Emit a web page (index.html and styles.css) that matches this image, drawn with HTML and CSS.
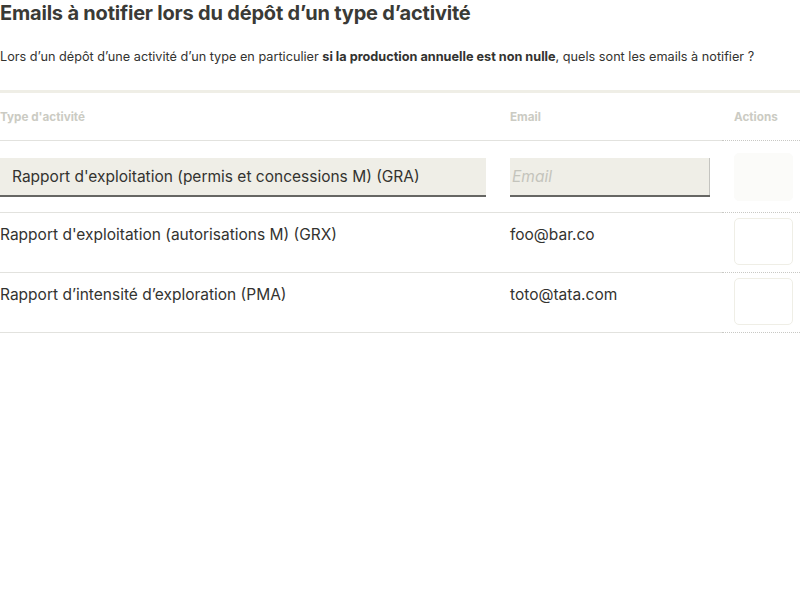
FILE: index.html
```html
<!DOCTYPE html>
<html lang="fr">
<head>
<meta charset="utf-8">
<link rel="stylesheet" href="styles.css">
</head>
<body>
<h1 class="title">Emails à notifier lors du dépôt d’un type d’activité</h1>
<p class="intro">Lors d’un dépôt d’une activité d’un type en particulier <strong>si la production annuelle est non nulle</strong>, quels sont les emails à notifier ?</p>
<table class="tbl">
  <thead>
    <tr>
      <th class="c-type">Type d'activité</th>
      <th class="c-email">Email</th>
      <th class="c-act">Actions</th>
    </tr>
  </thead>
  <tbody>
    <tr class="row-new">
      <td class="c-type"><div class="field">Rapport d'exploitation (permis et concessions M) (GRA)</div></td>
      <td class="c-email"><div class="field placeholder">Email</div></td>
      <td class="c-act"><div class="btn btn-disabled"></div></td>
    </tr>
    <tr class="row">
      <td class="c-type">Rapport d'exploitation (autorisations M) (GRX)</td>
      <td class="c-email">foo@bar.co</td>
      <td class="c-act"><div class="btn"></div></td>
    </tr>
    <tr class="row">
      <td class="c-type">Rapport d’intensité d’exploration (PMA)</td>
      <td class="c-email">toto@tata.com</td>
      <td class="c-act"><div class="btn"></div></td>
    </tr>
  </tbody>
</table>
</body>
</html>
```

FILE: styles.css
```css
html, body {
  margin: 0;
  padding: 0;
  background: #fff;
}
body {
  font-family: Inter, "Liberation Sans", sans-serif;
  color: #333330;
}
.title {
  margin: 0;
  font-size: 20px;
  line-height: 26px;
  font-weight: 700;
  color: #3a3a36;
  letter-spacing: -0.2px;
}
.intro {
  margin: 22px 0 0 0;
  font-size: 12.7px;
  line-height: 18px;
  color: #333330;
}
.intro strong {
  font-weight: 700;
}
.tbl {
  margin-top: 24px;
  width: 800px;
  border-collapse: collapse;
  border-top: 3px solid #efeee6;
}
.tbl th {
  height: 47px;
  font-size: 11.7px;
  font-weight: 700;
  color: #cbcbc3;
  text-align: left;
  vertical-align: middle;
  padding: 0 12px;
  border-bottom: 1px solid #e2e2de;
}
.tbl td {
  font-size: 15.5px;
  line-height: 24px;
  padding: 0 12px;
  border-bottom: 1px solid #e2e2de;
}
.tbl .c-type { width: 486px; padding-left: 0; }
.tbl .c-email { width: 200px; }
.tbl .c-act { width: 59px; padding-right: 7px; border-bottom: 1px dotted #c8c8c4; }
.row-new td {
  height: 71px;
  vertical-align: middle;
}
.row td {
  height: 49px;
  vertical-align: top;
  padding-top: 10px;
}
.row td.c-act { padding-top: 5px; height: 54px; }
.field {
  height: 37px;
  background: #efeee7;
  border-bottom: 2px solid #666663;
  box-sizing: content-box;
  padding: 0 12px;
  line-height: 37px;
  font-size: 15.5px;
  color: #333330;
  margin-top: 2px;
}
.c-email .field {
  padding: 0 2px;
  box-shadow: inset -1px 0 0 #c4c4c0;
}
.placeholder {
  font-style: italic;
  color: #c4c4bc;
}
.btn {
  width: 59px;
  height: 47px;
  box-sizing: border-box;
  border: 1px solid #efeee6;
  border-radius: 5px;
  background: #fff;
}
.btn-disabled {
  border-color: #fbfbf9;
  background: #fbfbf9;
  height: 48px;
}
```
